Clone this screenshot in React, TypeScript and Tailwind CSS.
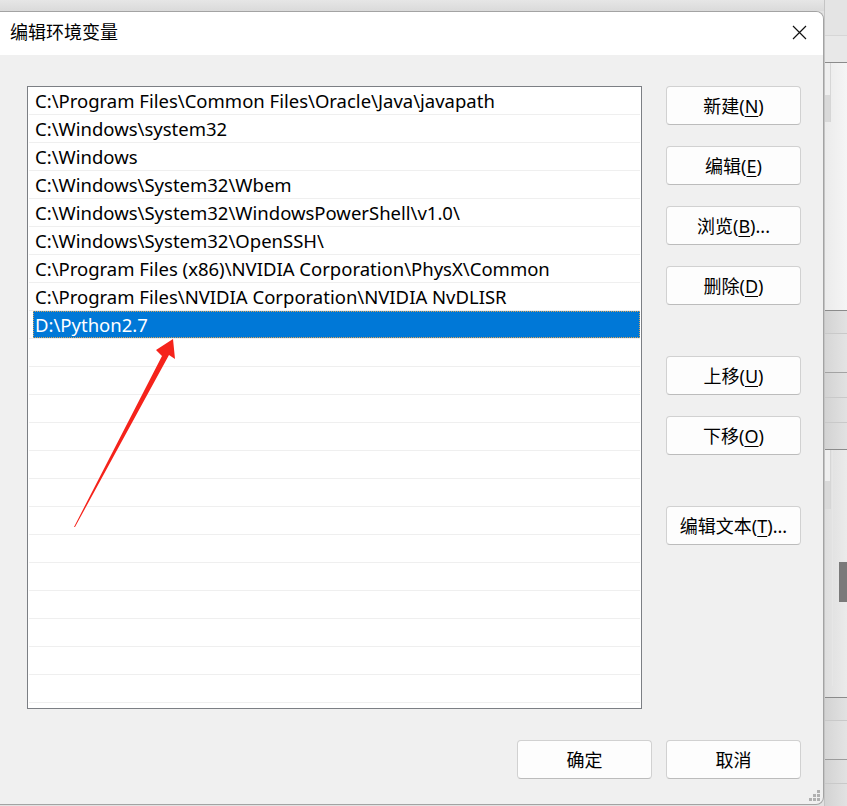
import React from "react";

const FONT = "font-['Noto_Sans','Noto_Sans_CJK_SC',sans-serif]";

const paths = [
  "C:\\Program Files\\Common Files\\Oracle\\Java\\javapath",
  "C:\\Windows\\system32",
  "C:\\Windows",
  "C:\\Windows\\System32\\Wbem",
  "C:\\Windows\\System32\\WindowsPowerShell\\v1.0\\",
  "C:\\Windows\\System32\\OpenSSH\\",
  "C:\\Program Files (x86)\\NVIDIA Corporation\\PhysX\\Common",
  "C:\\Program Files\\NVIDIA Corporation\\NVIDIA NvDLISR",
  "D:\\Python2.7",
];

const SELECTED = 8;
const ROWS = 23;

const Btn = ({
  label,
  hotkey,
  suffix = "",
  className = "",
}: {
  label: string;
  hotkey?: string;
  suffix?: string;
  className?: string;
}) => (
  <button
    className={`h-[39px] w-[135px] shrink-0 rounded-[4px] border border-[#d1d1d1] border-b-[#bcbcbc] bg-[#fdfdfd] text-[18px] leading-none text-black ${className}`}
  >
    {label}
    {hotkey && (
      <>
        (<span className="underline underline-offset-[3px]">{hotkey}</span>)
      </>
    )}
    {suffix}
  </button>
);

const PathList = () => (
  <div className="h-[623px] w-[615px] shrink-0 overflow-hidden border border-[#7c7f84] bg-white">
    {Array.from({ length: ROWS }).map((_, i) => {
      const text = paths[i];
      const selected = i === SELECTED;
      return (
        <div
          key={i}
          className="mx-[1px] flex h-[28px] items-stretch border-b border-[#efefef]"
        >
          {selected ? (
            <div className="ml-[4px] flex flex-1 items-center bg-[#0078d7] pl-[2px] pt-[1px] text-[18.5px] text-white outline-1 -outline-offset-1 outline-dotted outline-[#d9a35a]">
              {text}
            </div>
          ) : (
            <div className="flex flex-1 items-center pl-[6px] pt-[1px] text-[18.5px] text-black">
              {text}
            </div>
          )}
        </div>
      );
    })}
  </div>
);

const Track = ({ h, fill }: { h: string; fill: string }) => (
  <div className={`flex w-[6px] flex-col justify-end border-r border-[#d6d6d6] bg-[#efefef] ${h}`}>
    <div className={`bg-[#d9d9d9] ${fill}`} />
  </div>
);

const BackWindow = () => (
  <div className="flex w-[23px] flex-col border-l border-[#c4c4c4]">
    <div className="h-[36px] border-b border-[#d6d6d6] bg-[#e4e4e4]" />
    <div className="h-[27px] border-b border-[#8b8b8b] bg-[#e8e8e8]" />
    <div className="flex h-[248px] border-b border-[#8b8b8b] bg-gradient-to-r from-[#ebebeb] to-[#f5f5f5]">
      <Track h="h-[59px]" fill="h-[27px]" />
    </div>
    <div className="h-[23px] border-b border-[#c9c9c9] bg-gradient-to-r from-[#d3d3d3] to-[#e2e2e2]" />
    <div className="h-[39px] border-b border-[#a3a3a3] bg-gradient-to-r from-[#d6d6d6] to-[#e4e4e4]" />
    <div className="h-[25px] border-b border-[#c9c9c9] bg-gradient-to-r from-[#d3d3d3] to-[#e2e2e2]" />
    <div className="h-[25px] border-b border-[#c9c9c9] bg-gradient-to-r from-[#d3d3d3] to-[#e2e2e2]" />
    <div className="h-[27px] border-b border-[#8b8b8b] bg-gradient-to-r from-[#d3d3d3] to-[#e2e2e2]" />
    <div className="flex h-[248px] border-b border-[#8b8b8b] bg-gradient-to-r from-[#dedede] to-[#ebebeb]">
      <Track h="h-[59px]" fill="h-[28px]" />
      <div className="ml-[1px] h-[236px] w-[1px] bg-[#e6e6e6]" />
      <div className="ml-[6px] mt-[112px] h-[40px] flex-1 bg-[#7a7a7a]" />
    </div>
    <div className="h-[23px] border-b border-[#c9c9c9] bg-gradient-to-r from-[#d3d3d3] to-[#e2e2e2]" />
    <div className="h-[39px] border-b border-[#9c9c9c] bg-gradient-to-r from-[#d6d6d6] to-[#e4e4e4]" />
    <div className="h-[24px] border-b border-[#c9c9c9] bg-gradient-to-r from-[#d3d3d3] to-[#e2e2e2]" />
    <div className="h-[22px] bg-gradient-to-r from-[#d3d3d3] to-[#e2e2e2]" />
  </div>
);

export default function App() {
  return (
    <div
      className={`relative flex h-[806px] w-[847px] overflow-hidden bg-[#e2e2e2] ${FONT}`}
    >
      <div className="flex w-[824px] shrink-0 flex-col">
        <div className="h-[11px] bg-gradient-to-b from-[#e6e6e6] to-[#dadada]" />
        <div className="relative flex h-[794px] flex-col overflow-hidden rounded-r-[8px] border-y border-r border-[#a3a3a3] bg-[#f0f0f0]">
          <div className="flex h-[43px] shrink-0 items-center justify-between bg-white pb-[2px] pl-[10px] pr-[16px]">
            <span className="text-[18px] text-black">编辑环境变量</span>
            <svg width="15" height="15" viewBox="0 0 15 15">
              <path d="M1 1 L14 14 M14 1 L1 14" stroke="#111" strokeWidth="1.2" />
            </svg>
          </div>

          <div className="flex flex-1 flex-col pl-[27px] pr-[22px] pt-[31px]">
            <div className="flex gap-[24px]">
              <PathList />
              <div className="flex flex-col gap-[21px]">
                <Btn label="新建" hotkey="N" />
                <Btn label="编辑" hotkey="E" />
                <Btn label="浏览" hotkey="B" suffix="..." />
                <Btn label="删除" hotkey="D" />
                <Btn label="上移" hotkey="U" className="mt-[30px]" />
                <Btn label="下移" hotkey="O" />
                <Btn label="编辑文本" hotkey="T" suffix="..." className="mt-[30px]" />
              </div>
            </div>
            <div className="mt-[31px] flex justify-end gap-[14px]">
              <Btn label="确定" />
              <Btn label="取消" />
            </div>
          </div>

          <svg
            className="absolute bottom-[2px] right-[2px]"
            width="12"
            height="12"
            viewBox="0 0 12 12"
          >
            <rect x="8" y="0" width="3" height="3" fill="#b0b0b0" />
            <rect x="4" y="4" width="3" height="3" fill="#b0b0b0" />
            <rect x="8" y="4" width="3" height="3" fill="#b0b0b0" />
            <rect x="0" y="8" width="3" height="3" fill="#b0b0b0" />
            <rect x="4" y="8" width="3" height="3" fill="#b0b0b0" />
            <rect x="8" y="8" width="3" height="3" fill="#b0b0b0" />
          </svg>
        </div>
      </div>

      <BackWindow />

      {/* red annotation arrow */}
      <svg
        className="pointer-events-none absolute left-0 top-0"
        width="847"
        height="806"
        viewBox="0 0 847 806"
      >
        <polygon
          points="74,527 162,356 156,350 173,339 175,359 169,355 75,527"
          fill="#f5231b"
        />
      </svg>
    </div>
  );
}
